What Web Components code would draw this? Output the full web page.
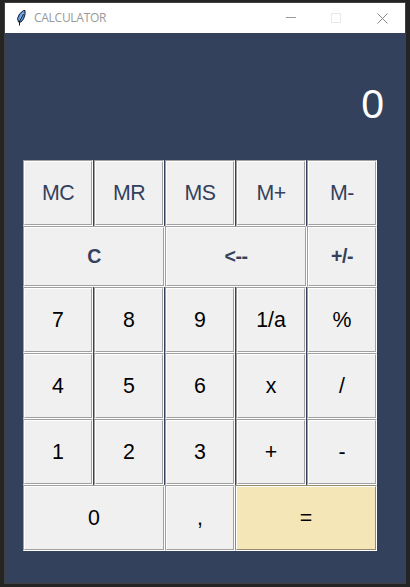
<!DOCTYPE html>
<html lang="en">
<head>
<meta charset="utf-8">
<title>CALCULATOR</title>
<style>
html,body{margin:0;height:100%;overflow:hidden;background:#242424}
</style>
</head>
<body>
<calc-window></calc-window>
<script>
class TitleBar extends HTMLElement {
  constructor() {
    super();
    this.attachShadow({mode: 'open'}).innerHTML = `
      <style>
        :host{display:flex;align-items:center;height:30px;background:#fff;color:#999;font:12px/30px "Open Sans","Noto Sans",sans-serif}
        .feather{width:12px;height:18px;margin-left:11px;flex:none}
        .label{margin-left:6px;flex:1;white-space:nowrap;letter-spacing:-.27px}
        .controls{display:flex;align-items:center;gap:35px;margin-right:17px}
        .controls svg{width:10px;height:10px;display:block}
        .controls svg:last-child{width:11px;height:11px;margin-left:1px}
      </style>
      <svg class="feather" viewBox="0 0 12 18">
        <path d="M7.500 1.500H9v4L7.500 10 5 13H2.500L1.500 9.500 3.500 5z" fill="#5b9bea" stroke="#111820" stroke-width="1"/>
        <path d="M7 4 3.800 10.500" stroke="#a5cbf8" stroke-width="1"/>
        <path d="M7.500 5 3.500 12.500v4" stroke="#101820" stroke-width="1" fill="none"/>
      </svg>
      <span class="label"><slot></slot></span>
      <div class="controls">
        <svg viewBox="0 0 10 10"><path d="M0 4.500h10" stroke="#999"/></svg>
        <svg viewBox="0 0 10 10"><path d="M.5.5h9v9h-9z" fill="none" stroke="#e8e8e8"/></svg>
        <svg viewBox="0 0 11 11"><path d="M.5.5l10 10M10.500.5L.5 10.500" stroke="#888" stroke-width="1"/></svg>
      </div>`;
  }
}
customElements.define('title-bar', TitleBar);

class CalcDisplay extends HTMLElement {
  constructor() {
    super();
    this.attachShadow({mode: 'open'}).innerHTML = `
      <style>
        :host{display:block;box-sizing:border-box;height:127px;padding:47px 21px 0 0;text-align:right;color:#fff;font:41px/48px "Liberation Sans",Arial,sans-serif}
      </style><slot></slot>`;
  }
}
customElements.define('calc-display', CalcDisplay);

class CalcKey extends HTMLElement {
  constructor() {
    super();
    this.attachShadow({mode: 'open'}).innerHTML = `
      <style>
        :host{display:block;box-sizing:border-box;width:70px;background:#f0f0f0;border:1px solid;border-color:#a0a0a0 #fff #fff #a0a0a0;color:#000;font:21.33px/1 "Liberation Sans",Arial,sans-serif}
        .face{box-sizing:border-box;height:100%;border:1px solid;border-color:#fff #a0a0a0 #a0a0a0 #fff;display:flex;align-items:center;justify-content:center;padding-top:1px}
        :host([wide]){width:142px;grid-column:span 2}
        :host([tone=navy]){color:#33415c;letter-spacing:-.5px}
        :host([bold]){font-size:19.5px;font-weight:bold;letter-spacing:-.4px}
        :host([bold]) .face{padding-top:0}
        :host([tone=accent]){background:#f5e6b8;border-color:#948a6e #fff #fff #948a6e;margin-left:-1px}
        :host([tone=accent]) .face{border-color:#fff #948a6e #948a6e #fff}
      </style><div class="face"><slot></slot></div>`;
  }
}
customElements.define('calc-key', CalcKey);

class CalcKeypad extends HTMLElement {
  constructor() {
    super();
    this.attachShadow({mode: 'open'}).innerHTML = `
      <style>
        :host{display:grid;grid-template-columns:repeat(5,71px);grid-template-rows:66px 61px repeat(4,66px);margin-left:18px}
      </style><slot></slot>`;
  }
}
customElements.define('calc-keypad', CalcKeypad);

class CalcWindow extends HTMLElement {
  constructor() {
    super();
    this.attachShadow({mode: 'open'}).innerHTML = `
      <style>
        :host{display:block;box-sizing:border-box;width:410px;height:587px;padding:2px 4px 3px;background:#242424}
        .frame{box-sizing:border-box;width:402px;height:582px;border:1px solid #414141;background:#33415c}
      </style>
      <div class="frame">
        <title-bar>CALCULATOR</title-bar>
        <calc-display>0</calc-display>
        <calc-keypad>
          <calc-key tone="navy">MC</calc-key><calc-key tone="navy">MR</calc-key><calc-key tone="navy">MS</calc-key><calc-key tone="navy">M+</calc-key><calc-key tone="navy">M-</calc-key>
          <calc-key tone="navy" bold wide>C</calc-key><calc-key tone="navy" bold wide>&lt;--</calc-key><calc-key tone="navy" bold>+/-</calc-key>
          <calc-key>7</calc-key><calc-key>8</calc-key><calc-key>9</calc-key><calc-key>1/a</calc-key><calc-key>%</calc-key>
          <calc-key>4</calc-key><calc-key>5</calc-key><calc-key>6</calc-key><calc-key>x</calc-key><calc-key>/</calc-key>
          <calc-key>1</calc-key><calc-key>2</calc-key><calc-key>3</calc-key><calc-key>+</calc-key><calc-key>-</calc-key>
          <calc-key wide>0</calc-key><calc-key>,</calc-key><calc-key tone="accent" wide>=</calc-key>
        </calc-keypad>
      </div>`;
  }
}
customElements.define('calc-window', CalcWindow);
</script>
</body>
</html>
